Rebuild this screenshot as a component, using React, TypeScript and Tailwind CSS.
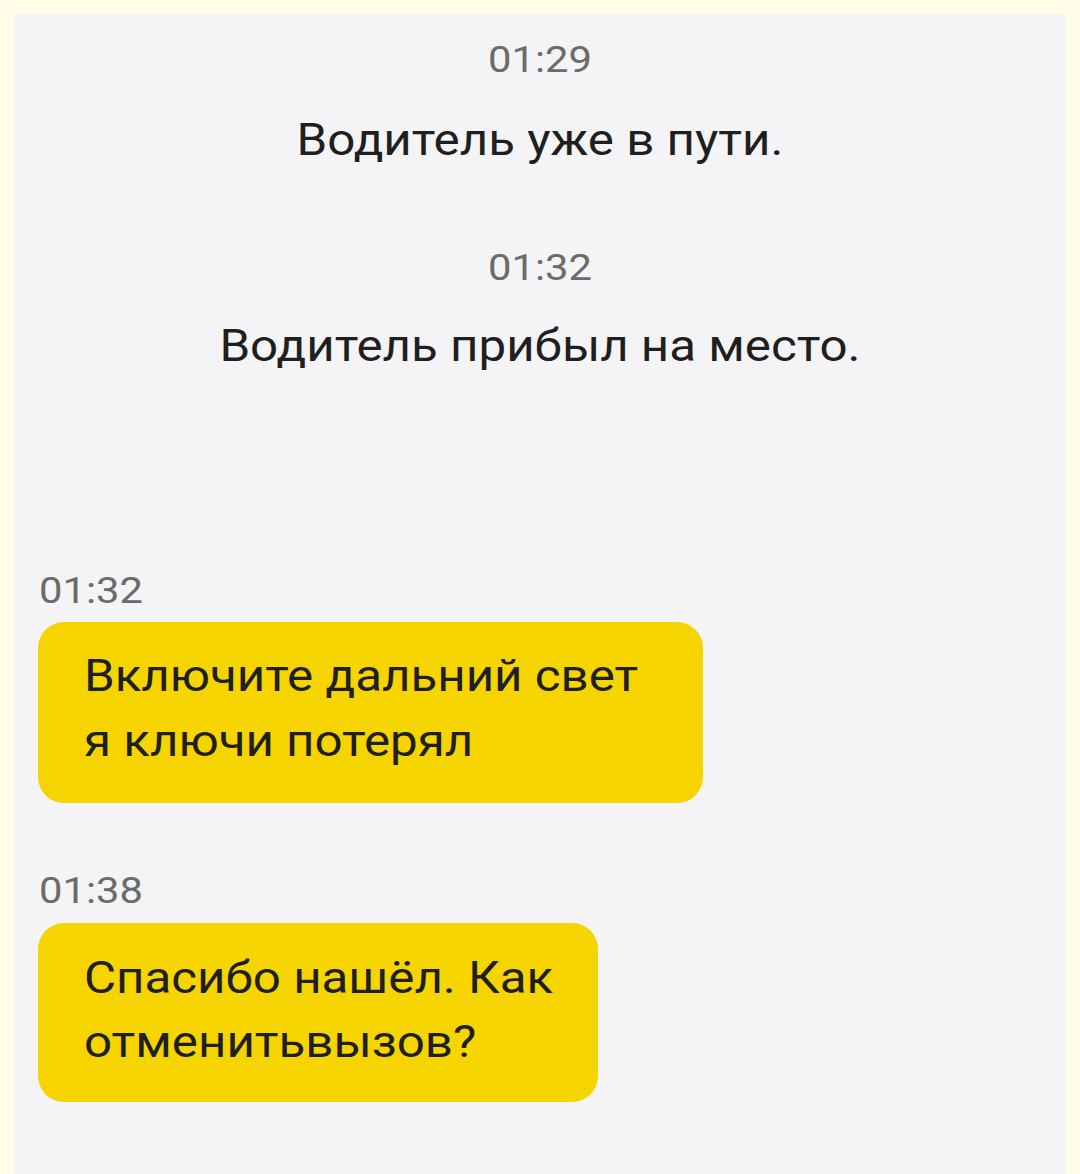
export default function App() {
  return (
    <div
      className="w-[1080px] h-[1174px] bg-[#fffee8] pt-[14px] px-[14px] overflow-hidden"
      style={{ fontFamily: 'Roboto, "Noto Sans", sans-serif' }}
    >
      <div className="h-full bg-[#f4f4f6] flex flex-col">
        {/* статусы */}
        <div className="mt-[28px] text-center text-[36px] leading-[36px] text-[#6b6b6b] scale-x-[1.16]">01:29</div>
        <div className="mt-[40px] text-center text-[44px] leading-[44px] text-[#1f1f1f] scale-x-[1.12]">
          Водитель уже в пути.
        </div>
        <div className="mt-[88px] text-center text-[36px] leading-[36px] text-[#6b6b6b] scale-x-[1.16]">01:32</div>
        <div className="mt-[38px] text-center text-[44px] leading-[44px] text-[#1f1f1f] scale-x-[1.12]">
          Водитель прибыл на место.
        </div>

        {/* сообщения */}
        <div className="mt-[205px] ml-[25px] text-[36px] leading-[36px] text-[#6b6b6b] scale-x-[1.16] origin-left">
          01:32
        </div>
        <div className="mt-[13px] ml-[24px] w-[665px] rounded-[26px] bg-[#f6d400] pt-[22px] pb-[29px] pl-[46px] text-[44px] leading-[65px] text-[#1f1f1f]">
          <div className="scale-x-[1.12] origin-left">Включите дальний свет</div>
          <div className="scale-x-[1.12] origin-left">я ключи потерял</div>
        </div>

        <div className="mt-[70px] ml-[25px] text-[36px] leading-[36px] text-[#6b6b6b] scale-x-[1.16] origin-left">
          01:38
        </div>
        <div className="mt-[14px] ml-[24px] w-[560px] rounded-[26px] bg-[#f6d400] pt-[23px] pb-[28px] pl-[46px] text-[44px] leading-[64px] text-[#1f1f1f]">
          <div className="scale-x-[1.12] origin-left">Спасибо нашёл. Как</div>
          <div className="scale-x-[1.12] origin-left">отменитьвызов?</div>
        </div>
      </div>
    </div>
  );
}
